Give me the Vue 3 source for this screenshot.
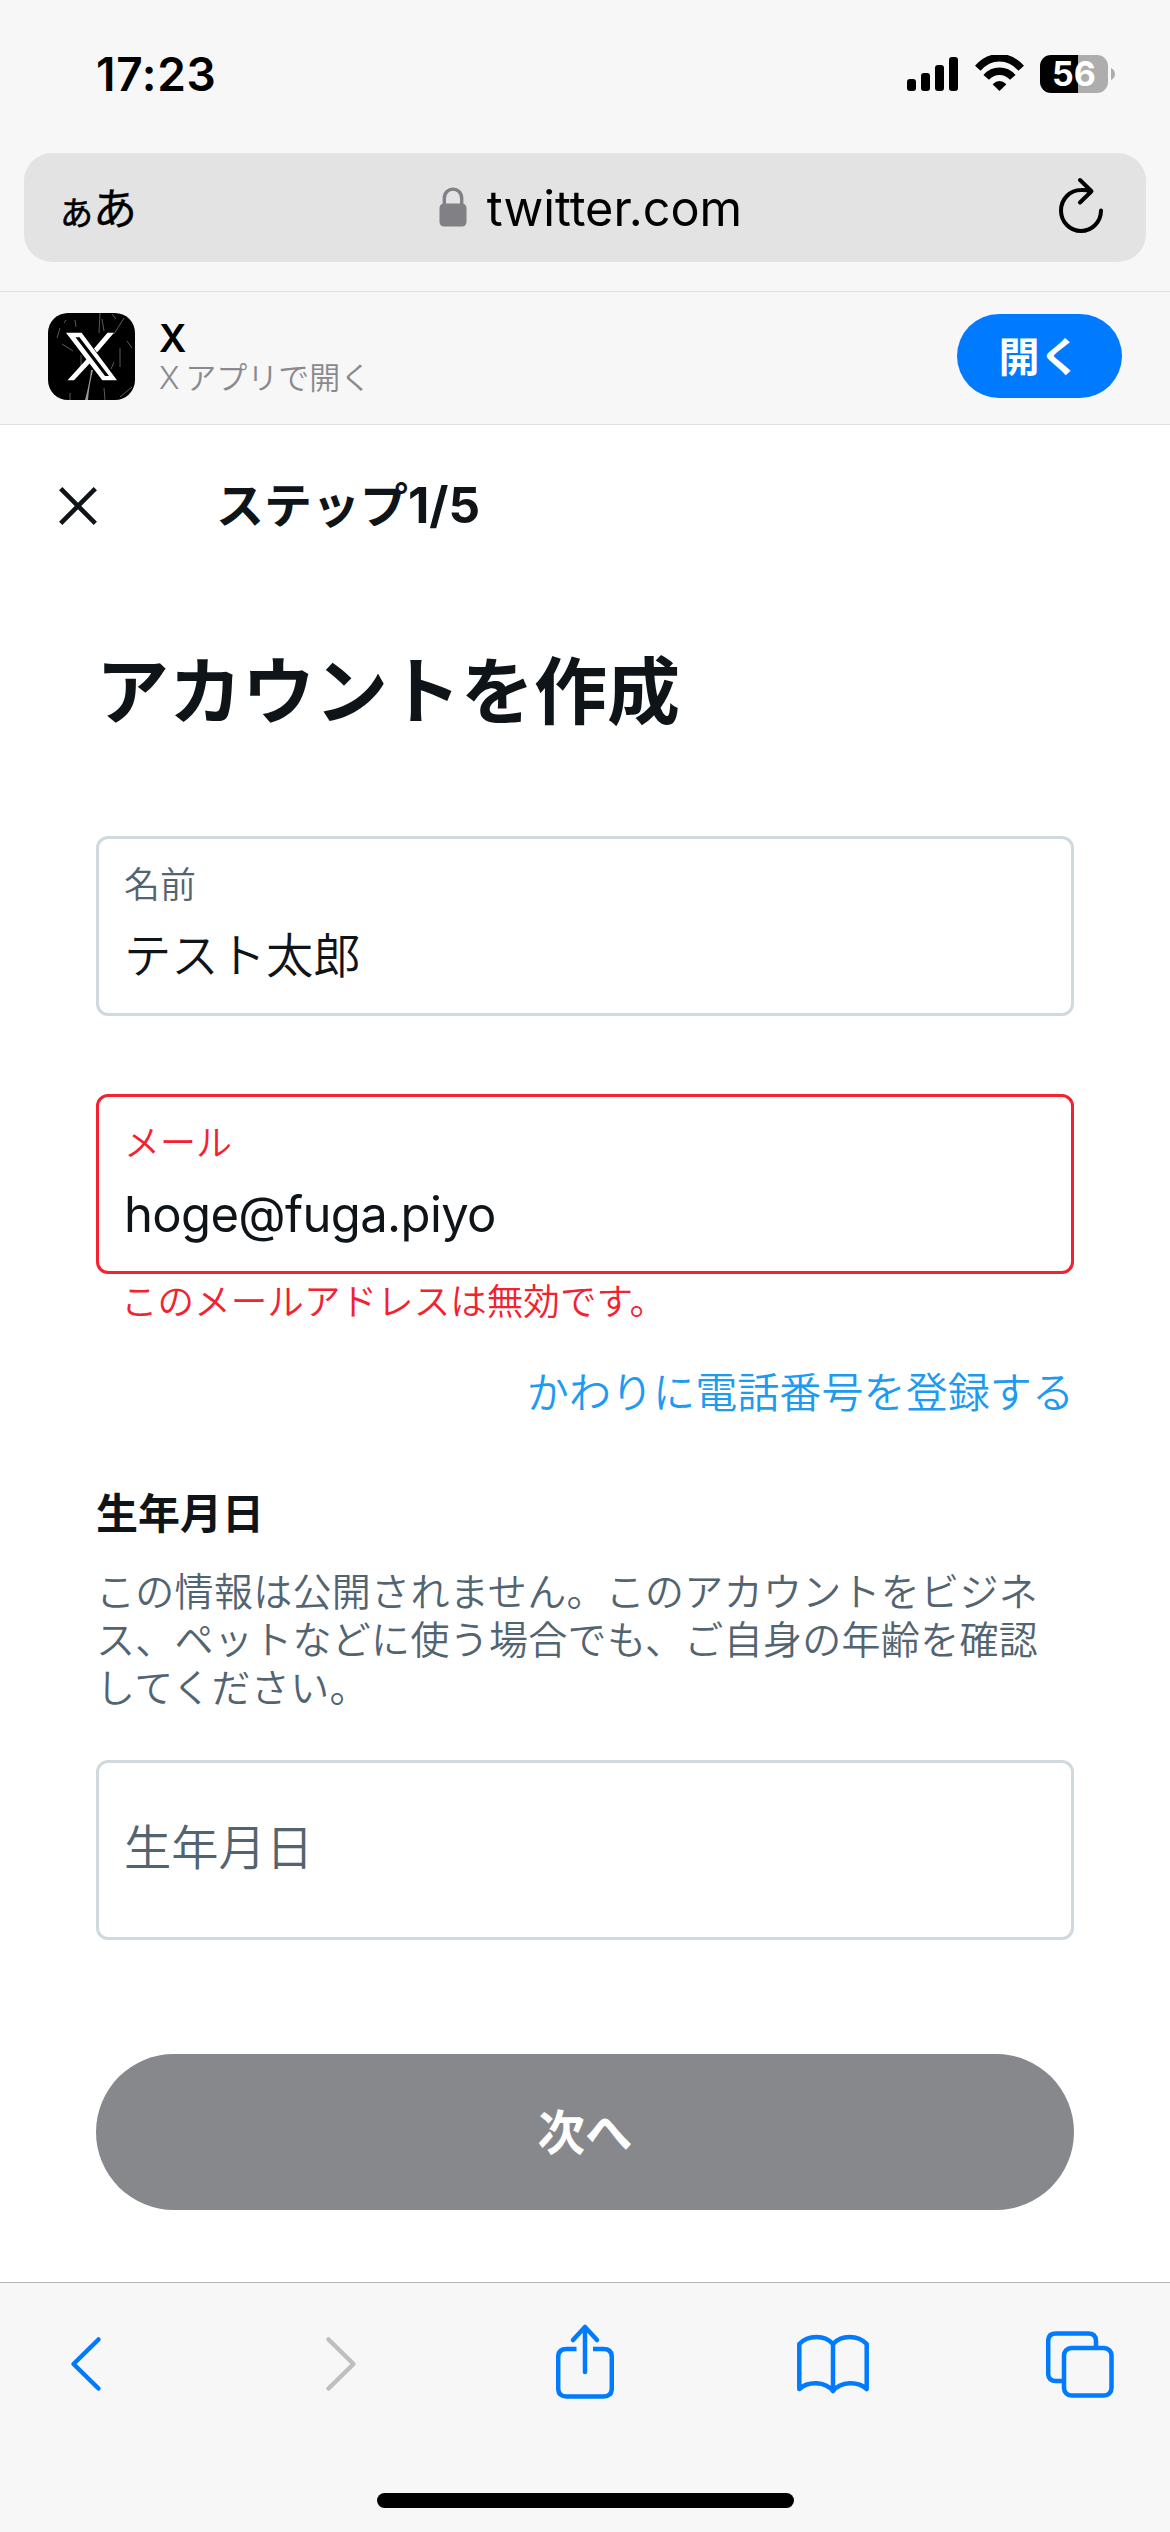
<script setup>
const bars = [12, 18, 26, 34]
</script>

<template>
  <div class="screen">
    <header class="status">
      <span class="time">17:23</span>
      <div class="indicators">
        <svg class="signal" width="51" height="34" viewBox="0 0 51 34">
          <rect v-for="(h, i) in bars" :key="h" :x="i * 14" :y="34 - h" width="9" :height="h" rx="3" />
        </svg>
        <svg class="wifi" width="49" height="36" viewBox="0 0 49 36">
          <g fill="none" stroke="#000">
            <path d="M2.8 13.2C15-.8 34-.8 46.2 13.2" stroke-width="7.4" />
            <path d="M11.2 22.4C18.5 14.2 30.5 14.2 37.8 22.4" stroke-width="7.4" />
          </g>
          <path d="M17.6 29.2Q24.5 22.8 31.4 29.2L24.5 36Z" />
        </svg>
        <div class="battery"><span class="level">56</span></div>
        <svg class="nub" width="4" height="12" viewBox="0 0 4 12"><path d="M0 0Q4 2 4 6T0 12Z" fill="#adadad" /></svg>
      </div>
    </header>

    <div class="address">
      <div class="reader"><span class="small">あ</span><span>あ</span></div>
      <div class="domain">
        <svg width="28" height="40" viewBox="0 0 28 40">
          <rect x=".5" y="16.5" width="27" height="23" rx="4.5" fill="#808085" />
          <path d="M5.3 18V11.5C5.3-1 22.7-1 22.7 11.5V18" fill="none" stroke="#808085" stroke-width="3.4" />
        </svg>
        <span>twitter.com</span>
      </div>
      <svg class="reload" width="46" height="58" viewBox="0 0 46 58" fill="none" stroke="#000" stroke-width="4" stroke-linecap="round" stroke-linejoin="round">
        <path d="M43 33.5A20 20.5 0 1 1 23 13Q28 12.8 33 14.2M22 3L33.5 14.2L22 25.5" />
      </svg>
    </div>

    <section class="banner">
      <svg class="app-icon" width="87" height="87" viewBox="0 0 87 87">
        <rect width="87" height="87" rx="20" />
        <g fill="none" stroke="#fff" stroke-width=".8" opacity=".45">
          <path d="M52 0L51 20M54 6L56 18M76 5L66 21M64 1L68 6M27 7L28 14M16 10L18 7M14 31L25 38M72 35V54M66 49L63 56M33 42V59M84 74L72 84M56 75L57 87M4 80L8 86M22 80V87M12 15L9 25M79 28L84 35" />
        </g>
        <path d="M43 57Q42 68 37 87H40Q41 73 45 57Z" fill="#fff" opacity=".6" />
        <path fill="#fff" fill-rule="evenodd" d="M18 19.7H33.6L69 67.3H54.3ZM27.5 24.3L57 63H61L31.5 24.3Z" />
        <path fill="#fff" d="M59.5 19.7H66L49 39.6L46 35.5ZM19.5 67.3H26L42.5 49.5L39.5 45.2Z" />
      </svg>
      <div class="app-text">
        <strong>X</strong>
        <span>X アプリで開く</span>
      </div>
      <button class="open">開く</button>
    </section>

    <main class="sheet">
      <div class="step">
        <svg width="38" height="38" viewBox="0 0 38 38" stroke="#0f1419" stroke-width="4.6"><path d="M1.7 1.7L36.3 36.3M36.3 1.7L1.7 36.3" /></svg>
        <h2>ステップ<span>1/5</span></h2>
      </div>
      <h1>アカウントを作成</h1>

      <div class="field">
        <label>名前</label>
        <p class="value">テスト太郎</p>
      </div>
      <div class="field invalid">
        <label>メール</label>
        <p class="value latin">hoge@fuga.piyo</p>
      </div>
      <p class="error">このメールアドレスは無効です。</p>
      <a class="switch">かわりに電話番号を登録する</a>

      <h3>生年月日</h3>
      <p class="note">この情報は公開されません。このアカウントをビジネ<br>ス、ペットなどに使う場合でも、ご自身の年齢を確認<br>してください。</p>
      <div class="field birth">生年月日</div>
      <button class="next">次へ</button>
    </main>

    <footer class="toolbar">
      <nav>
        <svg width="32" height="56" viewBox="0 0 32 56"><path d="M28.5 3.5L3.5 28L28.5 52.5" /></svg>
        <svg class="forward" width="32" height="56" viewBox="0 0 32 56"><path d="M3.5 3.5L28.5 28L3.5 52.5" /></svg>
        <svg class="share" width="58" height="76" viewBox="0 0 58 76">
          <path stroke-linecap="butt" d="M20.5 26H10.5Q2.2 26 2.2 34V65.5Q2.2 73.5 10.5 73.5H47.5Q55.8 73.5 55.8 65.5V34Q55.8 26 47.5 26H37" />
          <path d="M29 49V4M17 17L29 4L41 17" />
        </svg>
        <svg class="book" width="72" height="60" viewBox="0 0 72 60">
          <path d="M36 57V10C28 .5 11 .5 2.3 10V55C11 47 28 47 36 57C44 47 61 47 69.7 55V10C61 .5 44 .5 36 10" />
        </svg>
        <svg class="tabs" width="68" height="67" viewBox="0 0 68 67">
          <path stroke-linecap="butt" d="M50 15V10Q50 2.5 42 2.5H10Q2.2 2.5 2.2 10V42.5Q2.2 50 10 50H16" />
          <rect x="18" y="17" width="47.5" height="47.5" rx="7.5" />
        </svg>
      </nav>
      <div class="home"></div>
    </footer>
  </div>
</template>

<style>
body { margin: 0; background: #fff; }
</style>

<style scoped>
* { box-sizing: border-box; margin: 0; padding: 0; }
svg { display: block; flex: none; }
.screen { width: 1170px; height: 2532px; display: flex; flex-direction: column; background: #fff; color: #0f1419; font-family: "Noto Sans CJK JP", sans-serif; overflow: hidden; white-space: nowrap; }
button { border: 0; font-family: inherit; }
.status { height: 153px; flex: none; background: #f7f7f7; display: flex; justify-content: space-between; padding: 50px 55px 0 96px; color: #000; font-family: Inter, sans-serif; }
.time { font-size: 46px; font-weight: 600; line-height: 49px; height: 50px; letter-spacing: .7px; }
.indicators { display: flex; padding-top: 5px; height: 43px; }
.signal { margin: 2px 17px 0 0; }
.wifi { margin-right: 16px; }
.battery { width: 68px; height: 38px; border-radius: 11px; background: linear-gradient(90deg, #000 38px, #adadad 38px); text-align: center; margin-right: 3px; }
.level { color: #fff; font-size: 34px; line-height: 38px; font-weight: 700; display: block; }
.nub { margin-top: 13px; }
.address { height: 138px; flex: none; background: #f7f7f7; padding: 0 24px; position: relative; display: flex; z-index: 0; justify-content: space-between; color: #000; }
.address::before { content: ""; position: absolute; z-index: -1; left: 24px; right: 24px; top: 0; height: 109px; border-radius: 28px; background: #e3e3e3; }
.reader { display: flex; align-items: baseline; font-size: 44px; line-height: 60px; padding: 23px 0 0 36px; width: 200px; font-weight: 400; -webkit-text-stroke: .4px #000; }
.reader .small { font-size: 33px; -webkit-text-stroke: .6px #000; }
.domain { display: flex; font-family: Inter, sans-serif; font-size: 48.6px; line-height: 60px; padding-top: 26px; }
.domain svg { margin: 8px 20px 0 0; }
.reload { margin: 24px 42px 0 101px; }
.banner { height: 134px; flex: none; background: #f7f7f7; border-top: 1px solid #dfdfdf; border-bottom: 1px solid #dfdfdf; display: flex; padding: 21px 48px 0; }
.app-text { margin-left: 24px; flex: 1; display: flex; flex-direction: column; font-family: Inter, "Noto Sans CJK JP", sans-serif; }
.app-text strong { color: #000; font-size: 38px; line-height: 50px; height: 50px; font-weight: 600; }
.app-text span { color: #8a8a8e; font-size: 31px; line-height: 30px; height: 30px; font-weight: 350; word-spacing: -3px; }
.open { width: 165px; height: 84px; margin-top: 1px; border-radius: 42px; background: #007aff; color: #fff; font-size: 41px; line-height: 77px; padding-bottom: 4px; font-weight: 600; }
.sheet { height: 1857px; flex: none; padding: 0 96px; display: flex; flex-direction: column; }
.step { height: 160px; display: flex; flex: none; padding-top: 62px; margin-left: -37px; }
h2 { margin-left: 119px; margin-top: -15px; font-size: 48px; line-height: 60px; font-weight: 700; }
h2 span { font-family: Inter, sans-serif; font-size: 49.5px; }
h1 { height: 251px; flex: none; font-size: 73px; line-height: 100px; padding-top: 51px; font-weight: 700; }
.field { height: 180px; flex: none; border: 3px solid #cfd9de; border-radius: 12px; padding: 16px 25px; }
label { display: block; font-size: 36px; line-height: 54px; height: 54px; color: #536471; font-weight: 350; }
.value { font-size: 47.3px; line-height: 70px; height: 70px; margin-top: 9px; font-weight: 350; }
.latin { font-family: Inter, sans-serif; font-size: 49px; letter-spacing: -.65px; margin-top: 13px; font-weight: 400; }
.invalid { margin-top: 78px; border-color: #f4212e; }
.invalid label, .error { color: #f4212e; }
.error { height: 52px; flex: none; font-size: 36.6px; line-height: 52px; padding-left: 25px; font-weight: 350; }
.switch { height: 60px; flex: none; margin-top: 34px; text-align: right; font-size: 42.1px; line-height: 60px; color: #1d9bf0; font-weight: 350; }
h3 { height: 60px; flex: none; margin-top: 61px; font-size: 42px; line-height: 60px; font-weight: 700; }
.note { height: 144px; flex: none; margin-top: 24px; font-size: 39px; line-height: 48px; letter-spacing: .3px; color: #536471; font-weight: 350; }
.birth { margin-top: 51px; padding-top: 44px; font-size: 47.3px; line-height: 76px; color: #536471; font-weight: 350; }
.next { height: 156px; flex: none; margin-top: 114px; border-radius: 78px; background: #87888c; color: #fff; font-size: 47.5px; font-weight: 700; line-height: 144px; padding-bottom: 4px; }
.toolbar { height: 250px; flex: none; background: #f7f7f7; border-top: 1px solid #b8b8b8; }
nav { height: 210px; padding: 53px 0 0 70px; display: flex; }
nav svg { fill: none; stroke: #007aff; stroke-width: 4.5; stroke-linecap: round; stroke-linejoin: round; }
nav .forward { stroke: #bfbfbf; margin-left: 223px; }
.share { margin-top: -13px; margin-left: 199px; }
.book { margin-top: -2px; margin-left: 183px; }
.tabs { margin-top: -5px; margin-left: 177px; }
.home { width: 417px; height: 15px; border-radius: 8px; background: #000; margin-left: 377px; }
</style>
